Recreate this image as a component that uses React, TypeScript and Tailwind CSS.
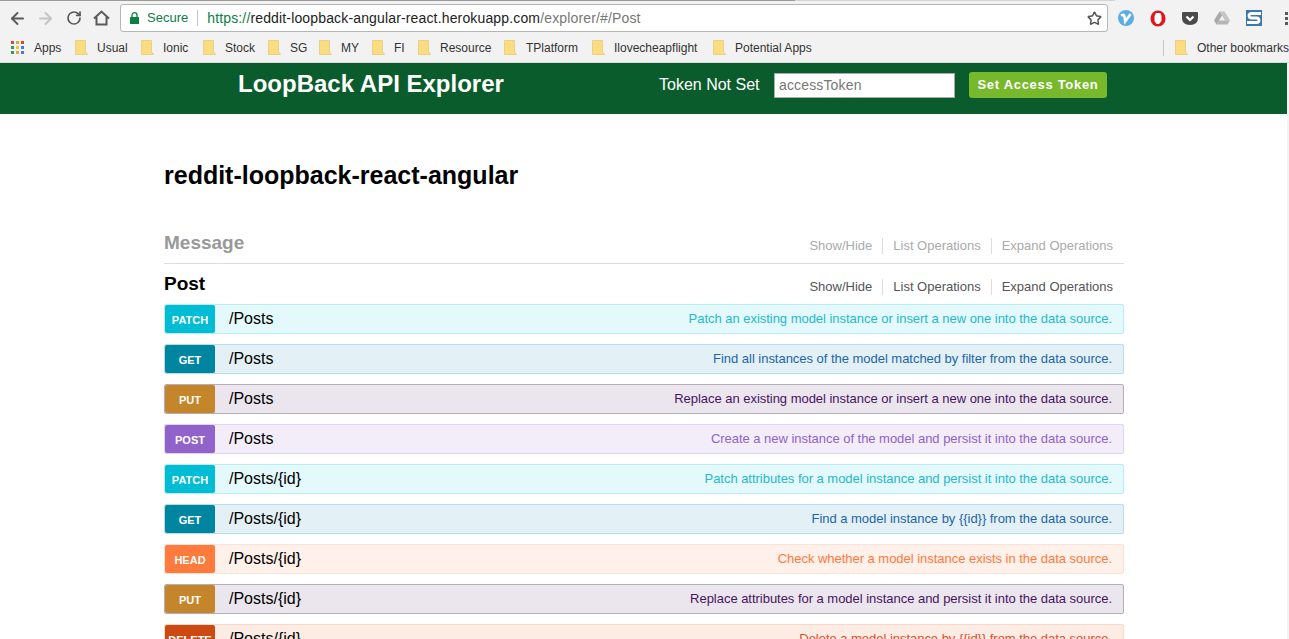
import { ArrowLeft, ArrowRight, RotateCw, Star } from "lucide-react";

const bookmarks = [
  { label: "Usual", width: "w-[66px]" },
  { label: "Ionic", width: "w-[62px]" },
  { label: "Stock", width: "w-[65px]" },
  { label: "SG", width: "w-[51px]" },
  { label: "MY", width: "w-[53px]" },
  { label: "FI", width: "w-[46px]" },
  { label: "Resource", width: "w-[86px]" },
  { label: "TPlatform", width: "w-[88px]" },
  { label: "Ilovecheapflight", width: "w-[121px]" },
  { label: "Potential Apps", width: "w-[110px]" },
];

const styles = {
  PATCH: { badge: "bg-[#00bcd4]", row: "bg-[#e4f9fb] border-[#b8eef3]", text: "text-[#26b8cc]" },
  GET: { badge: "bg-[#0085a1]", row: "bg-[#e3f1f6] border-[#b9dde8]", text: "text-[#1e64ab]" },
  PUT: { badge: "bg-[#c5862b]", row: "bg-[#ebe6ee] border-[#b5aeb8]", text: "text-[#47145f]" },
  POST: { badge: "bg-[#9162ca]", row: "bg-[#f3edfa] border-[#e3d5f1]", text: "text-[#9162ca]" },
  HEAD: { badge: "bg-[#ff7a3d]", row: "bg-[#fff0e9] border-[#fde3d6]", text: "text-[#ff7a3d]" },
  DELETE: { badge: "bg-[#cc4a12]", row: "bg-[#fdece4] border-[#f8d9ca]", text: "text-[#d9502a]" },
};

const rows: { method: keyof typeof styles; path: string; desc: string }[] = [
  { method: "PATCH", path: "/Posts", desc: "Patch an existing model instance or insert a new one into the data source." },
  { method: "GET", path: "/Posts", desc: "Find all instances of the model matched by filter from the data source." },
  { method: "PUT", path: "/Posts", desc: "Replace an existing model instance or insert a new one into the data source." },
  { method: "POST", path: "/Posts", desc: "Create a new instance of the model and persist it into the data source." },
  { method: "PATCH", path: "/Posts/{id}", desc: "Patch attributes for a model instance and persist it into the data source." },
  { method: "GET", path: "/Posts/{id}", desc: "Find a model instance by {{id}} from the data source." },
  { method: "HEAD", path: "/Posts/{id}", desc: "Check whether a model instance exists in the data source." },
  { method: "PUT", path: "/Posts/{id}", desc: "Replace attributes for a model instance and persist it into the data source." },
  { method: "DELETE", path: "/Posts/{id}", desc: "Delete a model instance by {{id}} from the data source." },
];

function Folder() {
  return (
    <svg width="13" height="15" viewBox="0 0 13 15" className="shrink-0">
      <path d="M0.5 0.5H10.5V11.5L12.5 14.5H0.5Z" fill="#fbdd80" stroke="#e8cf8c" />
    </svg>
  );
}

function HomeIcon() {
  return (
    <svg width="17" height="16" viewBox="0 0 17 16" className="ml-[11px] shrink-0">
      <path
        d="M1 8.5L8.5 1.5L16 8.5M3.5 7V14.5H13.5V7"
        fill="none"
        stroke="#5a5a5a"
        strokeWidth="2"
      />
    </svg>
  );
}

function LockIcon() {
  return (
    <svg width="9" height="12" viewBox="0 0 9 12" className="shrink-0">
      <path d="M2 5V3.2A2.5 2.5 0 0 1 7 3.2V5" fill="none" stroke="#0b8043" strokeWidth="1.3" />
      <rect x="0" y="5" width="9" height="7" rx="0.5" fill="#0b8043" />
    </svg>
  );
}

function AppsGrid() {
  const colors = ["#d9453a", "#e8a33d", "#d9453a", "#3a9b52", "#e8c53d", "#3f7fd8", "#3a9b52", "#e8a33d", "#3f7fd8"];
  return (
    <div className="grid grid-cols-3 gap-[2px] w-[13px] h-[13px] shrink-0">
      {colors.map((c, i) => (
        <span key={i} className="w-[3px] h-[3px]" style={{ backgroundColor: c }} />
      ))}
    </div>
  );
}

function Extensions() {
  return (
    <div className="flex items-center gap-[16px] ml-[10px]">
      {/* blue v badge */}
      <svg width="16" height="16" viewBox="0 0 16 16">
        <circle cx="8" cy="8" r="8" fill="#5aaee3" />
        <path d="M3.2 5.8Q5.8 3.8 6.4 6L7.2 11.5L12.6 4" fill="none" stroke="#fff" strokeWidth="2.6" />
      </svg>
      {/* red stop hand */}
      <svg width="16" height="17" viewBox="0 0 16 17">
        <ellipse cx="8" cy="8.5" rx="7.5" ry="8" fill="#e2141c" />
        <path d="M4.5 6L6 3H10.5L11.5 6V11L9 14H6.5L4.5 11Z" fill="#fff" />
      </svg>
      {/* pocket */}
      <svg width="16" height="15" viewBox="0 0 16 15">
        <path d="M1 1H15Q16 1 16 2V7Q16 14 8 14Q0 14 0 7V2Q0 1 1 1Z" fill="#4a4a4a" />
        <path d="M4.5 5.5L8 9L11.5 5.5" fill="none" stroke="#fff" strokeWidth="2.2" />
      </svg>
      {/* drive, greyed out */}
      <svg width="16" height="14" viewBox="0 0 16 14">
        <path d="M5.5 0.5H10.5L16 9.5H11Z" fill="#c4c4c4" />
        <path d="M5.5 0.5L0 9.5L2.5 13.5L8 4.5Z" fill="#a8a8a8" />
        <path d="M4.5 9.5H16L13.5 13.5H2.5Z" fill="#b5b5b5" />
      </svg>
      {/* S tile */}
      <svg width="16" height="16" viewBox="0 0 16 16">
        <rect width="16" height="16" fill="#3c78ad" />
        <path d="M15 3.5H5.5Q3 3.5 3 5.5Q3 8 5.5 8H10.5Q13 8 13 10.5Q13 12.5 10.5 12.5H1" fill="none" stroke="#fff" strokeWidth="2.8" />
      </svg>
    </div>
  );
}

function SectionHeader({ title, muted }: { title: string; muted?: boolean }) {
  return (
    <div className="flex items-center justify-between pr-[11px]">
      <h2 className={`text-[19px] leading-[24px] font-bold ${muted ? "text-[#999999]" : "text-black"}`}>{title}</h2>
      <ul className={`flex items-center pt-[6px] text-[13px] leading-[16px] ${muted ? "text-[#aaaaaa]" : "text-[#555555]"}`}>
        <li className="pr-[10px] border-r border-[#dddddd]">Show/Hide</li>
        <li className="px-[10px] border-r border-[#dddddd]">List Operations</li>
        <li className="pl-[10px]">Expand Operations</li>
      </ul>
    </div>
  );
}

export default function App() {
  return (
    <div className="h-[639px] w-[1289px] overflow-hidden bg-white font-['Liberation_Sans',Arial,sans-serif]">
      {/* browser chrome */}
      <div className="h-[63px] bg-[#f2f2f2] border-b border-[#dadada]">
        <div className="h-[3px] bg-[#f2f2f2] flex">
          <div className="w-[795px] h-[1px] bg-[#9b9b9b]" />
          <div className="w-[320px] h-[1px] bg-[#d4d4d4]" />
        </div>
        <div className="flex items-center h-[30px] pl-[8px]">
          <ArrowLeft size={19} strokeWidth={2.4} className="text-[#5a5a5a]" />
          <ArrowRight size={19} strokeWidth={2.4} className="text-[#c4c4c4] ml-[9px]" />
          <RotateCw size={16} strokeWidth={2.6} className="text-[#5a5a5a] ml-[11px]" />
          <HomeIcon />
          <div className="ml-[10px] w-[988px] h-[28px] flex items-center bg-white border border-[#b5b5b5] rounded-[3px] pl-[9px] pr-[5px] text-[14px]">
            <LockIcon />
            <span className="ml-[8px] text-[13px] text-[#0b8043]">Secure</span>
            <span className="ml-[9px] w-px h-[16px] bg-[#c4c4c4]" />
            <span className="ml-[9px] text-[#0b8043] tracking-[0.15px]">https://</span>
            <span className="text-[#222222] tracking-[0.15px]">reddit-loopback-angular-react.herokuapp.com</span>
            <span className="text-[#777777] tracking-[0.15px]">/explorer/#/Post</span>
            <Star size={15} strokeWidth={2.4} className="ml-auto text-[#555555]" />
          </div>
          <Extensions />
          <div className="ml-[23px] flex flex-col gap-[2px]">
            <span className="w-[3px] h-[3px] bg-[#5a5a5a]" />
            <span className="w-[3px] h-[3px] bg-[#5a5a5a]" />
            <span className="w-[3px] h-[3px] bg-[#5a5a5a]" />
          </div>
        </div>
        <div className="flex items-center h-[29px] pl-[11px] text-[12px] text-[#333333] whitespace-nowrap">
          <AppsGrid />
          <span className="ml-[10px] w-[41px]">Apps</span>
          {bookmarks.map((b) => (
            <div key={b.label} className={`flex items-center gap-[9px] ${b.width}`}>
              <Folder />
              <span>{b.label}</span>
            </div>
          ))}
          <div className="ml-[340px] w-px h-[16px] bg-[#c8c8c8]" />
          <div className="ml-[11px] flex items-center gap-[9px]">
            <Folder />
            <span>Other bookmarks</span>
          </div>
        </div>
      </div>

      <div className="flex h-[576px]">
        <div className="flex-1 min-w-0">
          {/* api explorer header */}
          <header className="h-[51px] bg-[#0a5c2c] flex items-center pl-[238px] pb-[7px]">
            <div className="w-[421px] pb-[2px] text-[24px] font-bold text-white leading-[42px]">LoopBack API Explorer</div>
            <div className="text-[16px] text-white w-[115px]">Token Not Set</div>
            <input
              readOnly
              placeholder="accessToken"
              className="w-[181px] h-[25px] px-[4px] bg-white border border-[#aaaaaa] text-[14px] tracking-[0.15px] placeholder:text-[#777777] outline-none"
            />
            <button className="ml-[14px] w-[138px] h-[26px] rounded-[3px] bg-[#77b82c] text-white text-[13px] font-bold tracking-[0.7px]">
              Set Access Token
            </button>
          </header>

          <main className="w-[960px] ml-[164px]">
            <h1 className="mt-[46px] text-[25px] leading-[30px] font-bold text-black">reddit-loopback-react-angular</h1>

            <section className="mt-[41px] pb-[8px] border-b border-[#dddddd]">
              <SectionHeader title="Message" muted />
            </section>
            <section className="mt-[8px]">
              <SectionHeader title="Post" />
              <div className="mt-[8px] flex flex-col gap-[10px]">
                {rows.map((r, i) => {
                  const s = styles[r.method];
                  return (
                    <div key={i} className={`h-[30px] flex items-center border rounded-[2px] pr-[11px] ${s.row}`}>
                      <span className={`w-[50px] h-[28px] shrink-0 rounded-[2px] flex items-center justify-center pt-[3px] text-white text-[11px] font-bold ${s.badge}`}>
                        {r.method}
                      </span>
                      <span className="ml-[14px] text-[16px] text-black">{r.path}</span>
                      <span className={`ml-auto pb-[1px] text-[13px] tracking-[-0.03px] ${s.text}`}>{r.desc}</span>
                    </div>
                  );
                })}
              </div>
            </section>
          </main>
        </div>
        {/* window edge */}
        <div className="w-[2px] bg-[#f4f4f4]" />
      </div>
    </div>
  );
}
